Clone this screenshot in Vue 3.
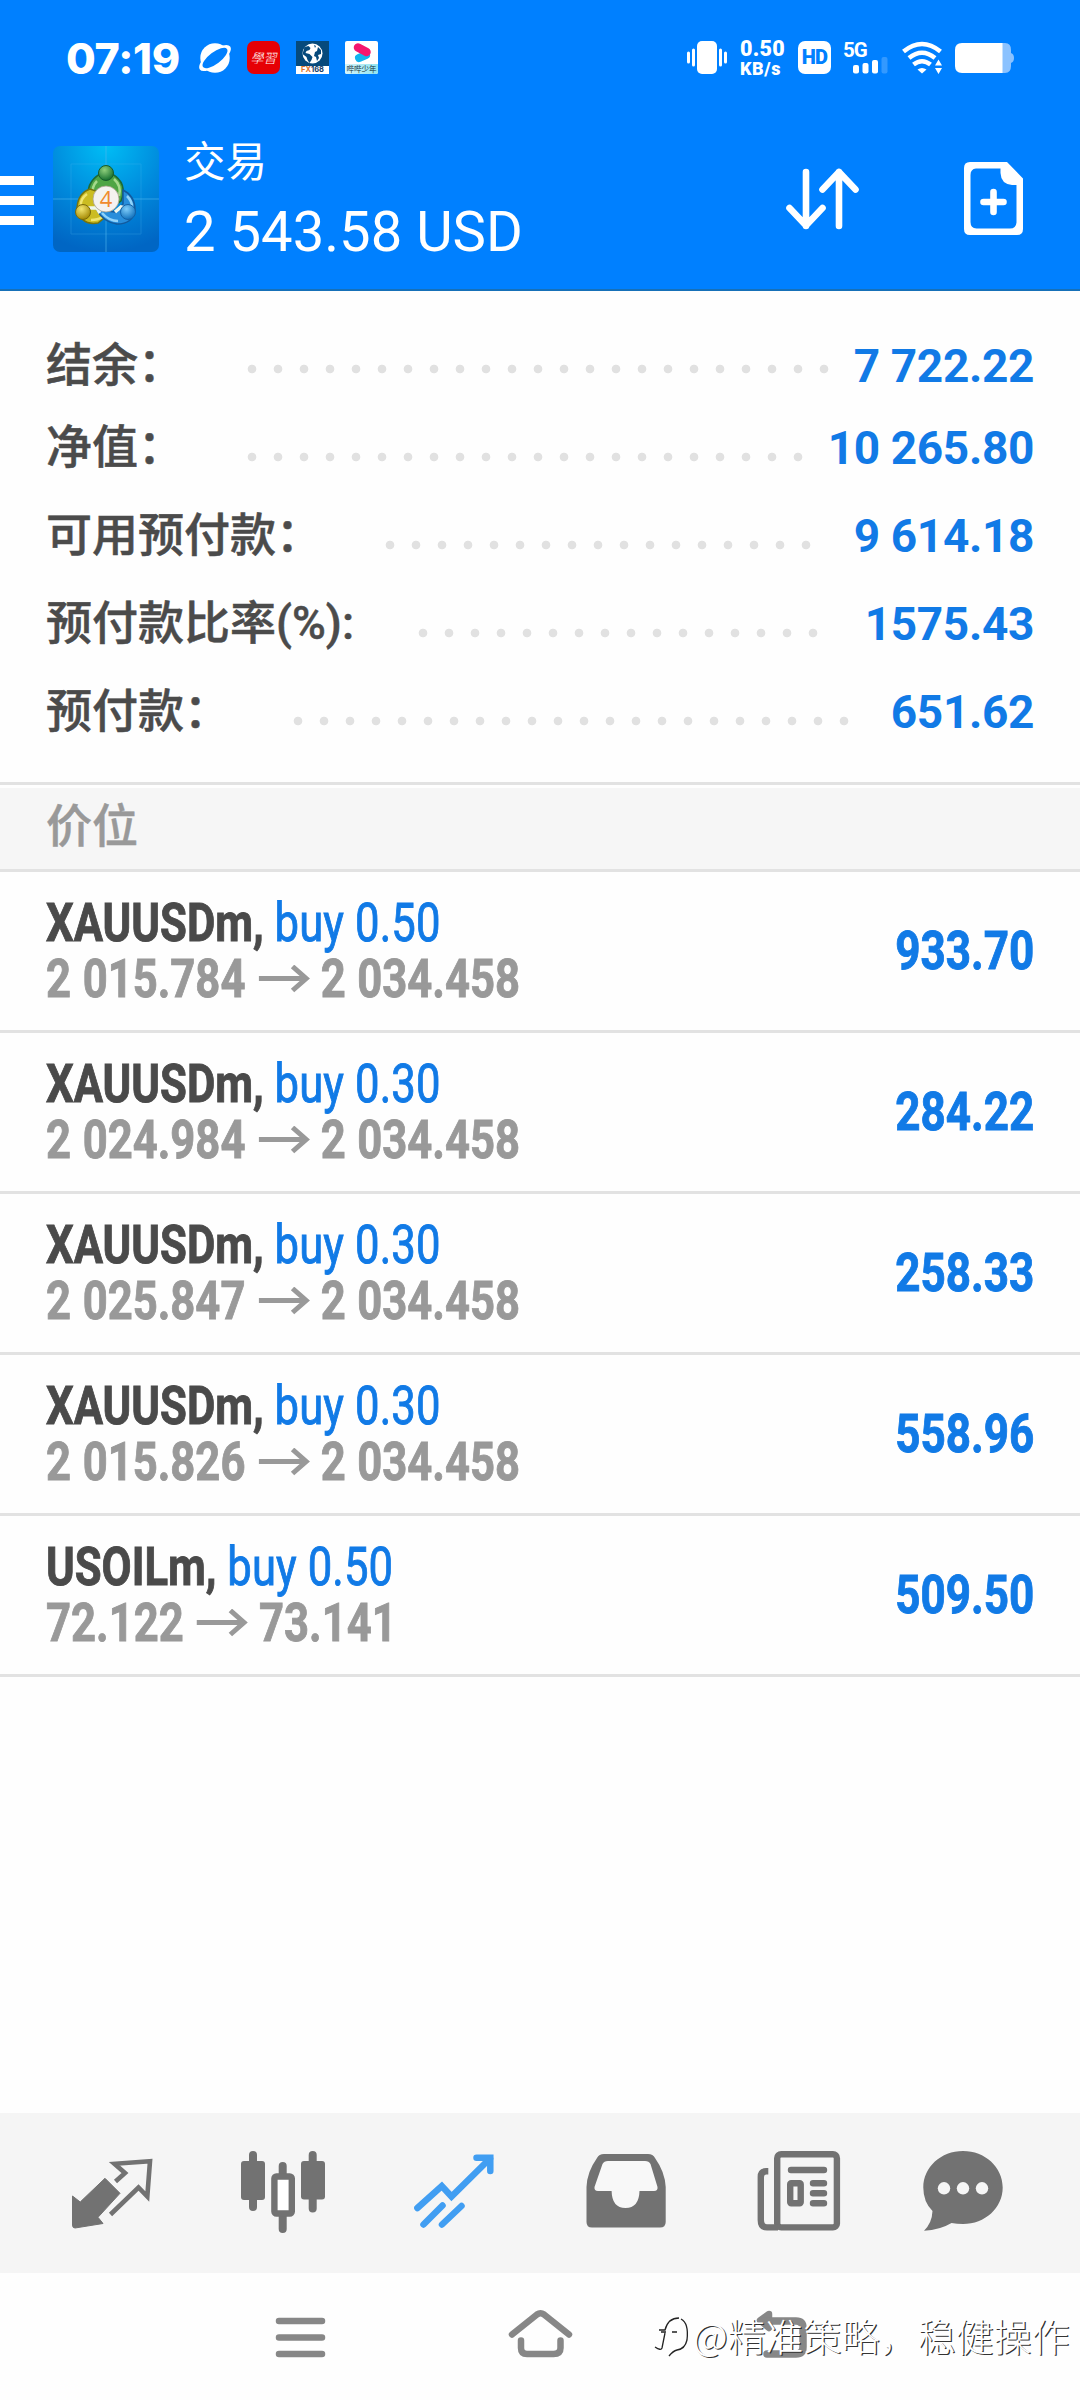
<script setup>
const summary = [
  { label: '结余：', value: '7 722.22', start: 238.7, dots: 23 },
  { label: '净值：', value: '10 265.80', start: 238.7, dots: 22 },
  { label: '可用预付款：', value: '9 614.18', start: 376.5, dots: 17 },
  { label: '预付款比率(%):', value: '1575.43', start: 409.5, dots: 16 },
  { label: '预付款：', value: '651.62', start: 284.9, dots: 22 },
]

const positions = [
  { symbol: 'XAUUSDm', side: 'buy 0.50', open: '2 015.784', current: '2 034.458', profit: '933.70' },
  { symbol: 'XAUUSDm', side: 'buy 0.30', open: '2 024.984', current: '2 034.458', profit: '284.22' },
  { symbol: 'XAUUSDm', side: 'buy 0.30', open: '2 025.847', current: '2 034.458', profit: '258.33' },
  { symbol: 'XAUUSDm', side: 'buy 0.30', open: '2 015.826', current: '2 034.458', profit: '558.96' },
  { symbol: 'USOILm', side: 'buy 0.50', open: '72.122', current: '73.141', profit: '509.50' },
]
</script>

<template>
  <div class="screen">
    <header class="top">
      <div class="status">
        <span class="clock">07:19</span>
        <svg class="planet" width="34" height="30" viewBox="0 0 34 30">
          <circle cx="17" cy="15" r="14.7" fill="#fff" />
          <ellipse cx="17" cy="15" rx="19" ry="7.6" fill="#fff" transform="rotate(-37 17 15)" />
          <ellipse cx="17" cy="15" rx="15" ry="5.8" fill="#0080ff" transform="rotate(-37 17 15)" />
        </svg>
        <span class="badge study">學習</span>
        <span class="badge fx">
          <svg width="33" height="25" viewBox="0 0 33 25">
            <circle cx="16.5" cy="12.5" r="10" fill="#fff" />
            <path d="M8.500 6l4-1 2 2-1 2-3 1-1 2 4 1 3 3-1 3-2 3-2-3-1-3-4-3zM18 4l2 1-1 2zM22 6l3 3v4l-3 1 1 3-2 3-1-4-2-1 1-4 2-1z" fill="#064a7c" />
          </svg>
          <b><i>FX</i>168</b>
        </span>
        <span class="badge play">
          <svg width="33" height="23" viewBox="0 0 33 23">
            <path d="M14 17l7-3" stroke="#12b4ee" stroke-width="8" stroke-linecap="round" />
            <path d="M13 6.500l8.500 4.500" stroke="#f5166e" stroke-width="8.500" stroke-linecap="round" />
          </svg>
          <b>哔哔少年</b>
        </span>

        <svg class="vibrate" width="40" height="33" viewBox="0 0 40 33">
          <rect x="10" y="0" width="20" height="33" rx="5" fill="#fff" />
          <path d="M1.500 12v9M6.500 9v15M33.500 9v15M38.500 12v9" stroke="#fff" stroke-width="3" stroke-linecap="round" />
        </svg>
        <span class="rate"><b>0.50</b><b>KB/s</b></span>
        <span class="hd">HD</span>
        <span class="cell">
          <b>5G</b>
          <svg width="45" height="17" viewBox="0 0 45 17">
            <g fill="#fff">
              <rect x="10" y="8" width="6" height="8.500" rx="2" />
              <rect x="19.500" y="6" width="6" height="10.500" rx="2" />
              <rect x="29" y="3" width="6" height="13.500" rx="2" />
              <rect x="38.500" y="0" width="6" height="16.500" rx="2" opacity=".2" />
            </g>
          </svg>
        </span>
        <svg class="wifi" width="40" height="32" viewBox="0 0 40 32">
          <g fill="none" stroke="#fff" stroke-width="4.600">
            <path d="M1.500 9.500Q20-5.500 38.500 9.500" />
            <path d="M7 16Q20 5.500 33 16" />
            <path d="M11.500 22.500Q20 16 28.500 22.500" />
          </g>
          <path d="M15.500 27.500Q20 24.500 24.500 27.500L20 31.500z" fill="#fff" />
          <path d="M31 22.500l5.500-7 5.500 7v4l-5.500 6-5.500-6z" fill="#0080ff" />
          <path d="M33 23.500l3.500-6 3.500 6zM33 26h7l-3.500 6z" fill="#fff" />
        </svg>
        <svg class="battery" width="59" height="30" viewBox="0 0 59 30">
          <path d="M47 0h3q6 0 6 7v3q3 1 3 5t-3 5v3q0 7-6 7h-3z" fill="#8bc2ff" />
          <path d="M47.500 0H7Q0 0 0 7v16q0 7 7 7h40.500z" fill="#fff" />
        </svg>
      </div>

      <div class="appbar">
        <div class="burger"><i></i><i></i><i></i></div>
        <svg class="logo" width="106" height="106" viewBox="0 0 106 106">
          <defs>
            <radialGradient id="bg" cx=".5" cy="0" r="1">
              <stop offset="0" stop-color="#00bdf5" />
              <stop offset=".55" stop-color="#0089dc" />
              <stop offset="1" stop-color="#0066c4" />
            </radialGradient>
            <radialGradient id="gr" cx=".4" cy=".3" r=".7"><stop offset="0" stop-color="#8fd07c" /><stop offset="1" stop-color="#17702f" /></radialGradient>
            <radialGradient id="ye" cx=".4" cy=".3" r=".7"><stop offset="0" stop-color="#f3e670" /><stop offset="1" stop-color="#a58a05" /></radialGradient>
            <radialGradient id="bl" cx=".4" cy=".3" r=".7"><stop offset="0" stop-color="#7fcdfa" /><stop offset="1" stop-color="#1272bd" /></radialGradient>
          </defs>
          <rect width="106" height="106" rx="7" fill="url(#bg)" />
          <path d="M53 0v106M0 53h106" stroke="#53b8ef" stroke-width="1" opacity=".6" />
          <path d="M18 18v70M88 18v70M18 18h70M18 88h70" stroke="#53b8ef" stroke-width="1" opacity=".25" />
          <path d="M47 28Q32 37 36 54L52 66L68 55Q75 37 59 28Z" fill="#4fa545" stroke="#1d6b35" stroke-width="1.500" />
          <path d="M44 35q-6 6-4 15M61 33q8 7 5 17" fill="none" stroke="#a5d98c" stroke-width="2.500" />
          <path d="M37 43Q25 47 24 62Q28 80 45 77L56 68L43 45Z" fill="#cbbc22" stroke="#75730e" stroke-width="1.500" />
          <path d="M34 48q-7 5-6 12M38 74q7 0 11-3" fill="none" stroke="#f0e570" stroke-width="2.500" />
          <path d="M70 44Q82 50 82 64Q80 78 64 78Q50 76 44 64L62 66L70 58Z" fill="#288edb" stroke="#125a9d" stroke-width="1.500" />
          <path d="M49 67q7 8 16 8M74 50q5 5 5 11" fill="none" stroke="#8fd3fb" stroke-width="2.500" />
          <path d="M35 62h9l3 5M62 66l6-5 4 1" fill="none" stroke="#eef7ee" stroke-width="3.500" />
          <circle cx="53" cy="27" r="7.500" fill="url(#gr)" stroke="#175c2c" />
          <circle cx="30" cy="66" r="7.500" fill="url(#ye)" stroke="#7a6a08" />
          <circle cx="75" cy="66" r="7.500" fill="url(#bl)" stroke="#1461a5" />
          <circle cx="53" cy="53" r="13" fill="#f4f2f0" stroke="#a9a28e" stroke-width=".8" />
          <text x="53" y="61" text-anchor="middle" class="four">4</text>
        </svg>
        <div class="heading">
          <span class="title">交易</span>
          <span class="total">2 543.58 USD</span>
        </div>
        <svg class="sort" width="73" height="62" viewBox="0 0 73 62" fill="none" stroke="#fff" stroke-width="6.600" stroke-linecap="round" stroke-linejoin="round">
          <path d="M20 4v54M3.500 40L20 57.500L36.500 40" />
          <path d="M53 58V4M36.500 21.500L53 4L69.500 21.500" />
        </svg>
        <svg class="doc" width="59" height="73" viewBox="0 0 59 73">
          <path d="M6 0H43L59 16.500V67q0 6-6 6H6q-6 0-6-6V6q0-6 6-6zM12 6.500Q6.500 7 6.500 13V60q0 6 6 6.500H46q6 0 6.500-6V23H48Q37 22 36.500 11V6.500z" fill="#fff" fill-rule="evenodd" />
          <path d="M29.500 30v20M19.500 40h20" stroke="#fff" stroke-width="6.600" stroke-linecap="round" />
        </svg>
      </div>
    </header>

    <section class="summary">
      <div v-for="row in summary" :key="row.label" class="line">
        <span class="label" :style="{ width: row.start - 46 + 'px' }">{{ row.label }}</span>
        <span class="leader" :style="{ width: row.dots * 26 + 'px' }"></span>
        <span class="value">{{ row.value }}</span>
      </div>
    </section>

    <div class="section-title">价位</div>

    <section>
      <article v-for="(p, i) in positions" :key="i" class="position">
        <div class="details">
          <div class="deal"><b>{{ p.symbol }},</b> <span>{{ p.side }}</span></div>
          <div class="prices">
            <span>{{ p.open }}</span>
            <svg width="63" height="28" viewBox="0 0 51 28" preserveAspectRatio="none">
              <path d="M0 13.500h46M33.500 1.500L47 13.500L33.500 25.500" fill="none" stroke="#999" stroke-width="5" />
            </svg>
            <span>{{ p.current }}</span>
          </div>
        </div>
        <div class="profit">{{ p.profit }}</div>
      </article>
    </section>

    <nav class="tabs">
      <svg viewBox="25 2113 172 160">
        <path d="M72.500 2196L80.200 2202L105 2178.300L120 2193.300L98 2217.300L103 2223.500L75 2228Q72.500 2228 72.500 2225z" fill="#727272" stroke="#727272" stroke-width="1" stroke-linejoin="round" />
        <path d="M115.500 2181.500L125 2173L114.500 2163.800L150 2161.300L147.300 2196.500L138.500 2187.500L110.500 2214.500" fill="none" stroke="#727272" stroke-width="4.600" />
      </svg>
      <svg viewBox="197 2113 172 160">
        <path d="M253 2155v52M282.700 2166v9M282.700 2215v14M312.700 2155v53.500" stroke="#727272" stroke-width="8" stroke-linecap="round" />
        <rect x="241" y="2161" width="24" height="39" rx="3" fill="#727272" />
        <rect x="301" y="2161" width="24" height="38.500" rx="3" fill="#727272" />
        <rect x="274.400" y="2176.500" width="17.400" height="37" rx="2" fill="#fff" stroke="#727272" stroke-width="6.400" />
      </svg>
      <svg viewBox="369 2113 172 160" fill="none" stroke="#419ef2" stroke-width="6.500" stroke-linecap="round">
        <path d="M417.400 2208L441.800 2186L451.500 2196.500L490 2158.500" />
        <path d="M476.500 2157.700H490.300V2171" />
        <path d="M423.500 2224.500L442.500 2205.500M442 2224.500L461.500 2206" />
      </svg>
      <svg viewBox="541 2113 172 160">
        <path d="M586.500 2222V2187Q587 2172 597 2158Q599 2154 604 2154H648Q653 2154 655 2158Q665 2172 665.700 2187V2222Q665.700 2227.500 660 2227.500H592Q586.500 2227.500 586.500 2222z" fill="#727272" />
        <path d="M608 2161H645Q649 2161 650.500 2164L657.500 2187Q658 2191 654 2191H639.500Q639 2208 625.500 2208Q612 2208 611.600 2191H598Q594 2191 594.500 2187L602.500 2164Q604 2161 608 2161z" fill="#f8f8f8" />
      </svg>
      <svg viewBox="713 2113 172 160" fill="none" stroke="#727272" stroke-width="6.400">
        <rect x="777.200" y="2154.200" width="59.700" height="73.200" rx="4" />
        <path d="M768.300 2171.300H766Q760.800 2171.300 760.800 2177V2220Q760.800 2227.400 767 2227.400H778" />
        <path d="M791 2170h33M813 2183.200h11M813 2193.200h11M813 2203.200h11" stroke-linecap="round" />
        <rect x="790.200" y="2183.200" width="10.500" height="20" rx="1" />
      </svg>
      <svg viewBox="885 2113 172 160">
        <path d="M963 2151C985 2151 1002.700 2167 1002.700 2187.500S985 2224 963 2224Q957 2224 951.500 2223Q940 2230 924 2230.700Q932 2223 932.500 2211Q923.300 2202 923.300 2187.500C923.300 2167 941 2151 963 2151z" fill="#727272" />
        <g fill="#f6f6f6"><circle cx="944" cy="2188.300" r="6.200" /><circle cx="963" cy="2188.300" r="6.200" /><circle cx="982" cy="2188.300" r="6.200" /></g>
      </svg>
    </nav>

    <footer class="system">
      <svg width="240" height="127" viewBox="180 2273 240 127" fill="none" stroke="#878787" stroke-width="6.500" stroke-linecap="round">
        <path d="M279 2321h43M279 2337.500h43M279 2354h43" />
      </svg>
      <svg width="240" height="127" viewBox="420 2273 240 127" fill="none" stroke="#878787" stroke-width="6.500" stroke-linecap="round" stroke-linejoin="round">
        <path d="M512 2334.500L537 2314.500Q540.500 2312 544 2314.500L569 2334.500" />
        <path d="M521 2340.500V2348Q521 2354 527 2354H553.500Q560.500 2354 560.500 2348V2340.500" />
      </svg>
      <svg width="240" height="127" viewBox="660 2273 240 127" fill="none" stroke="#878787" stroke-width="6.500" stroke-linecap="round" stroke-linejoin="round">
        <path d="M769 2314L760 2320.500L769 2328z" fill="#878787" />
        <path d="M764 2321H796Q803 2321 803 2328V2347Q803 2354 796 2354H767" stroke-width="7.500" />
      </svg>
      <div class="watermark">
        <svg width="38" height="50" viewBox="0 0 38 50" fill="none">
          <g stroke="#222" stroke-width="1.300">
            <path d="M6 20h6Q15 8 26 8M13 22h-5M2 37Q8 41 9 38L12 23" />
            <path d="M28 9Q36 13 34 30Q32 39 24 40Q20 41 16 46M19 22h5" />
          </g>
        </svg>
        <span>@精准策略，稳健操作</span>
      </div>
    </footer>
  </div>
</template>

<style>
body { margin: 0; background: #fefefe; }
</style>

<style scoped>
.screen {
  width: 1080px;
  height: 2400px;
  display: flex;
  flex-direction: column;
  overflow: hidden;
  background: #fefefe;
  font-family: Roboto, "Noto Sans CJK SC", sans-serif;
}
.top {
  box-sizing: border-box;
  height: 291px;
  background: #0080ff;
  border-bottom: 2px solid #1670b8;
  color: #fff;
}
.status {
  display: flex;
  align-items: center;
  height: 115px;
  padding-left: 66px;
}
.clock {
  width: 132px;
  font: 800 43px/50px Inter, sans-serif;
  letter-spacing: -.3px;
}
.planet { margin-right: 15px; overflow: visible; }
.badge {
  display: flex;
  flex-direction: column;
  width: 33px;
  height: 33px;
  margin-right: 16px;
  overflow: hidden;
}
.study {
  display: block;
  border-radius: 7px;
  background: #e60005;
  font: italic 300 13px/33px "Noto Sans CJK TC", sans-serif;
  text-align: center;
}
.fx { background: #064a7c; }
.fx b {
  height: 8px;
  background: #fff;
  color: #123c66;
  font: 700 7.500px/8px Inter, sans-serif;
  text-align: center;
}
.fx i { color: #e0742b; font-style: normal; }
.play { margin-right: 0; border-radius: 2px; background: #fff; }
.play b {
  height: 10px;
  background: linear-gradient(90deg, #d5f5fa, #8fe3f0);
  color: #12303c;
  font: 400 7.500px/10px "Noto Sans CJK SC", sans-serif;
  text-align: center;
}
.vibrate { margin-left: 309px; }
.rate {
  display: flex;
  flex-direction: column;
  gap: 2px;
  width: 57px;
  padding: 3px 0 0 13px;
  box-sizing: border-box;
  font: 700 18px/18px Roboto, sans-serif;
  white-space: nowrap;
}
.rate b { letter-spacing: .6px; }
.rate b:first-child { font-size: 21.500px; letter-spacing: .3px; }
.hd {
  width: 33px;
  height: 33px;
  margin-left: 14px;
  border-radius: 7px;
  background: #fff;
  color: #0080ff;
  font: 900 20px/33px Roboto, sans-serif;
  text-align: center;
  letter-spacing: -.8px;
}
.cell {
  display: flex;
  flex-direction: column;
  width: 45px;
  height: 32px;
  margin-left: 12px;
}
.cell b { height: 15px; font: 700 20.500px/17px Roboto, sans-serif; letter-spacing: -1px; }
.wifi { margin-left: 14px; overflow: visible; }
.battery { margin-left: 13px; }
.appbar { display: flex; align-items: flex-start; padding-top: 31px; }
.burger { display: flex; flex-direction: column; gap: 11px; width: 33.500px; margin: 30px 19px 0 0; }
.burger i { height: 9px; background: #fff; }
.logo { flex: none; margin-right: -.5px; }
.four { font: 500 22px "Open Sans", sans-serif; fill: #f08a2e; }
.heading { display: flex; flex-direction: column; width: 602px; margin: -14px 0 0 26px; }
.title { font: 400 41.500px/54px "Noto Sans CJK SC", sans-serif; }
.total { font-size: 56.200px; line-height: 66px; margin-top: 13px; white-space: nowrap; }
.sort { margin-top: 22px; }
.doc { margin: 16px 0 0 105px; }

.summary { height: 434px; padding: 31px 0 26px 46px; }
.line { display: flex; width: 988px; height: 88px; font-size: 46px; line-height: 88px; }
.line:first-child { height: 82px; }
.label {
  flex: none;
  margin-top: -1px;
  color: #4b4b4b;
  font-weight: 500;
  white-space: nowrap;
  -webkit-text-stroke: .5px #4b4b4b;
}
.leader {
  flex: none;
  height: 26px;
  margin-top: 40px;
  background: radial-gradient(circle, #e1e1e1 3.900px, transparent 4.700px) 0 0 / 26px 26px;
}
.line:first-child .leader { margin-top: 34px; }
.value {
  margin-left: auto;
  color: #117ae6;
  font-size: 46px;
  font-weight: 700;
  letter-spacing: -.35px;
  white-space: nowrap;
}

.section-title {
  box-sizing: border-box;
  height: 90px;
  padding-left: 46px;
  border-top: 3px solid #e2e2e2;
  border-bottom: 3px solid #e2e2e2;
  background: #f6f6f6;
  box-shadow: inset 0 3px #fefefe;
  color: #999;
  font: 500 46px/74px "Noto Sans CJK SC", sans-serif;
  -webkit-text-stroke: .5px #999;
}

.position {
  box-sizing: border-box;
  display: flex;
  justify-content: space-between;
  height: 161px;
  padding: 23px 46px 0;
  border-bottom: 3px solid #e2e2e2;
  font-size: 53.300px;
  line-height: 56px;
  white-space: nowrap;
}
.details { width: 600px; transform: scaleX(.818); transform-origin: left; }
.deal b { color: #4a4a4a; -webkit-text-stroke: .9px #4a4a4a; }
.deal span { color: #117ae6; -webkit-text-stroke: .9px #117ae6; letter-spacing: .15px; }
.prices {
  display: flex;
  align-items: center;
  color: #999;
  font-weight: 700;
  word-spacing: 1px;
  -webkit-text-stroke: .9px #999;
}
.prices svg { margin: 0 13px 0 16px; }
.profit {
  margin-top: 28px;
  color: #117ae6;
  font-weight: 700;
  -webkit-text-stroke: .9px #117ae6;
  transform: scaleX(.826);
  transform-origin: right;
}

.tabs { display: flex; height: 160px; margin-top: auto; padding-left: 25px; background: #f5f5f5; }
.tabs svg { flex: none; width: 172px; height: 160px; }
.system { position: relative; display: flex; flex: none; height: 127px; padding-left: 180px; }
.watermark {
  position: absolute;
  left: 653px;
  top: 37px;
  display: flex;
  align-items: center;
  color: #fff;
  font: 300 38px/50px "Noto Sans CJK SC", sans-serif;
  text-shadow: 1.200px 1.200px .6px #333;
  white-space: nowrap;
}
.watermark svg { margin-right: 2px; }
</style>
